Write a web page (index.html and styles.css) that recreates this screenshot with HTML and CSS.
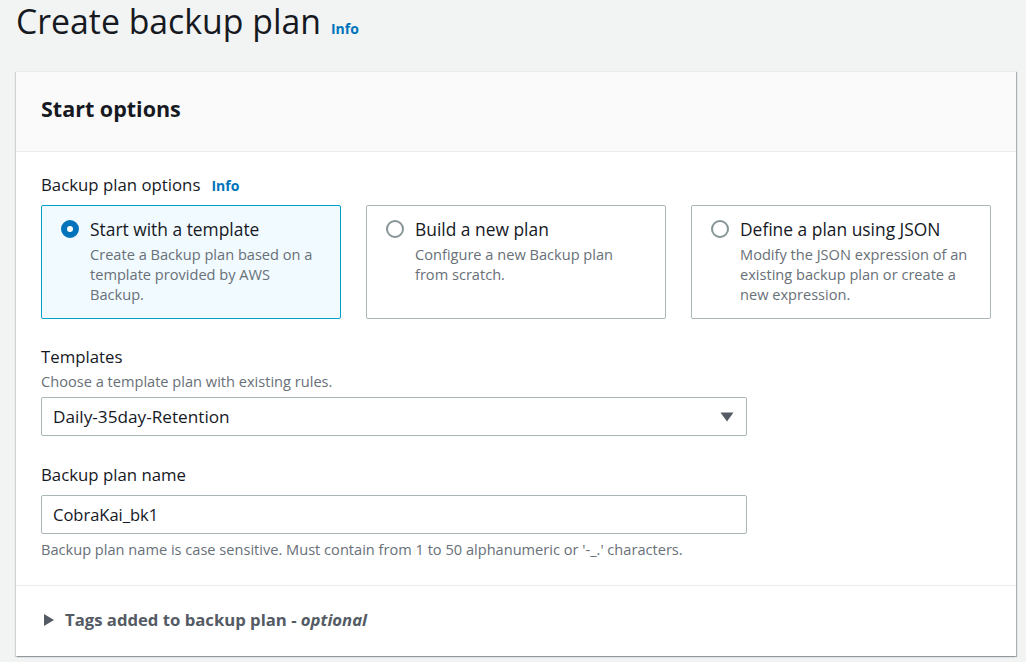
FILE: index.html
```html
<!DOCTYPE html>
<html lang="en">
<head>
<meta charset="utf-8">
<title>Create backup plan</title>
<link rel="stylesheet" href="styles.css">
</head>
<body>
<header class="page-head">
  <h1 class="page-title">Create backup plan</h1>
  <a class="info info-lg" href="#">Info</a>
</header>

<section class="panel">
  <div class="panel-head">
    <h2 class="panel-title">Start options</h2>
  </div>

  <div class="panel-body">
    <div class="field">
      <div class="label-row">
        <span class="label">Backup plan options</span>
        <a class="info" href="#">Info</a>
      </div>
      <div class="tiles">
        <label class="tile selected">
          <span class="radio checked"></span>
          <span class="tile-text">
            <span class="tile-title">Start with a template</span>
            <span class="tile-desc">Create a Backup plan based on a template provided by AWS Backup.</span>
          </span>
        </label>
        <label class="tile">
          <span class="radio"></span>
          <span class="tile-text">
            <span class="tile-title">Build a new plan</span>
            <span class="tile-desc">Configure a new Backup plan from scratch.</span>
          </span>
        </label>
        <label class="tile">
          <span class="radio"></span>
          <span class="tile-text">
            <span class="tile-title">Define a plan using JSON</span>
            <span class="tile-desc">Modify the JSON expression of an existing backup plan or create a new expression.</span>
          </span>
        </label>
      </div>
    </div>

    <div class="field field-templates">
      <div class="label">Templates</div>
      <div class="hint">Choose a template plan with existing rules.</div>
      <div class="select">
        <span class="select-value">Daily-35day-Retention</span>
        <svg class="caret" width="14" height="10" viewBox="0 0 14 10"><path d="M0.5 0.5 H13.5 L7 9.5 Z" fill="#545b64"/></svg>
      </div>
    </div>

    <div class="field field-name">
      <div class="label">Backup plan name</div>
      <div class="input">CobraKai_bk1</div>
      <div class="hint hint-below">Backup plan name is case sensitive. Must contain from 1 to 50 alphanumeric or '-_.' characters.</div>
    </div>
  </div>

  <div class="panel-foot">
    <svg class="expand" width="10" height="12" viewBox="0 0 10 12"><path d="M0 0 L10 6 L0 12 Z" fill="#545b64"/></svg>
    <span class="expand-title">Tags added to backup plan - <em>optional</em></span>
  </div>
</section>
</body>
</html>
```

FILE: styles.css
```css
* { box-sizing: border-box; }

body {
  margin: 0;
  background: #f2f3f3;
  font-family: "Open Sans", "Liberation Sans", sans-serif;
  color: #16191f;
  height: 662px;
  overflow: hidden;
}

.page-head {
  display: flex;
  align-items: baseline;
  gap: 10px;
  height: 71px;
  padding-left: 16px;
  padding-top: 1px;
}

.page-title {
  margin: 0;
  font-size: 33.8px;
  line-height: 40px;
  font-weight: 400;
  color: #16191f;
}

.info {
  color: #0073bb;
  font-weight: 700;
  font-size: 14px;
  text-decoration: none;
}

.panel {
  margin-left: 16px;
  width: 1000px;
  background: #fff;
  border-top: 1px solid #eaeded;
  box-shadow: 1px 1px 1px 0 rgba(0, 28, 36, 0.3), -1px 1px 1px 0 rgba(0, 28, 36, 0.15);
}

.panel-head {
  background: #fafafa;
  border-bottom: 1px solid #eaeded;
  height: 80px;
  display: flex;
  align-items: center;
  padding-left: 25px;
  padding-bottom: 6px;
}

.panel-title {
  margin: 0;
  font-size: 21.5px;
  line-height: 28px;
  font-weight: 700;
}

.panel-body {
  padding: 22px 25px 26px;
  border-bottom: 1px solid #eaeded;
}

.label-row {
  display: flex;
  align-items: baseline;
  gap: 11px;
  margin-bottom: 9px;
}

.label {
  font-size: 16.8px;
  line-height: 22px;
  color: #16191f;
}

.tiles {
  display: grid;
  grid-template-columns: repeat(3, 300px);
  column-gap: 25px;
}

.tile {
  display: flex;
  gap: 11px;
  border: 1px solid #aab7b8;
  border-radius: 2px;
  padding: 12px 10px 14px 19px;
  background: #fff;
}

.tile.selected {
  border-color: #00a1c9;
  background: #f1faff;
}

.radio {
  flex: none;
  width: 18px;
  height: 18px;
  margin-top: 2px;
  border-radius: 50%;
  border: 2px solid #879596;
  background: #fff;
}

.radio.checked {
  border: 6px solid #0073bb;
  background: #fff;
}

.tile-text {
  display: flex;
  flex-direction: column;
  gap: 4px;
  width: 231px;
}

.tile-title {
  font-size: 17.4px;
  line-height: 22px;
  color: #16191f;
  white-space: nowrap;
}

.tile-desc {
  font-size: 14.6px;
  line-height: 20px;
  color: #687078;
}

.field-templates { margin-top: 27px; }

.hint {
  font-size: 14.6px;
  line-height: 20px;
  color: #687078;
  margin-top: 3px;
}

.select, .input {
  width: 706px;
  height: 39px;
  border: 1px solid #aab7b8;
  border-radius: 2px;
  display: flex;
  align-items: center;
  padding: 0 12px 0 11px;
  color: #16191f;
  background: #fff;
}

.select {
  margin-top: 6px;
  justify-content: space-between;
  font-size: 17.2px;
}

.input {
  margin-top: 9px;
  font-size: 16.5px;
}

.field-name { margin-top: 28px; }

.hint-below { margin-top: 5px; }

.panel-foot {
  display: flex;
  align-items: center;
  gap: 11px;
  padding: 23px 25px 25px 28px;
}

.expand-title {
  font-size: 16.7px;
  line-height: 22px;
  font-weight: 700;
  color: #545b64;
}

.expand-title em {
  font-style: italic;
}
```
